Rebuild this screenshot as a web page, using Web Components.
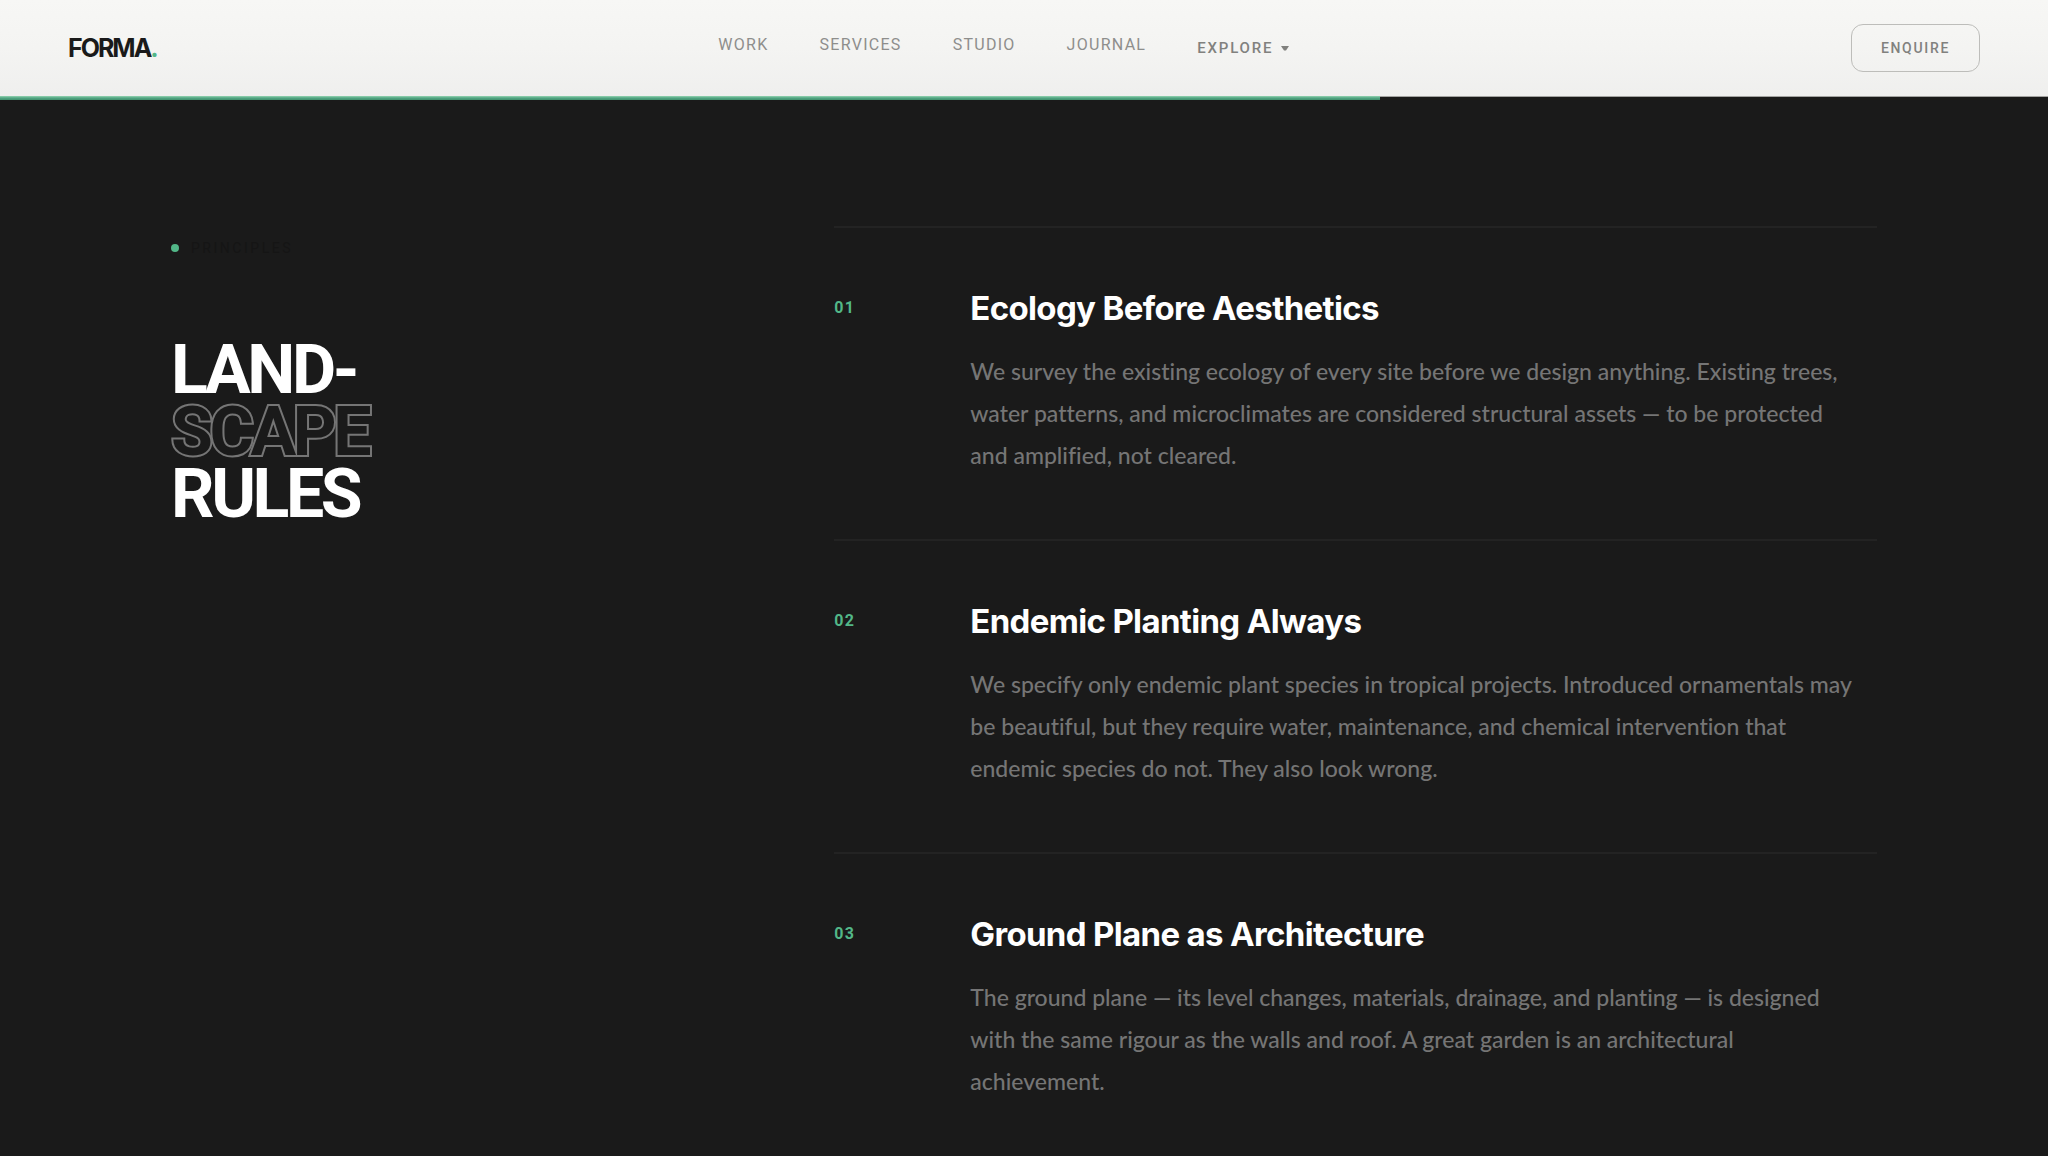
<!DOCTYPE html>
<html lang="en">
<head>
<meta charset="utf-8">
<title>FORMA. Principles</title>
<style>
  body { margin: 0; min-height: 100vh; background: #1a1a1a; font-family: Roboto, "Liberation Sans", sans-serif; }
</style>
</head>
<body>
<forma-header progress="67.4"></forma-header>
<main>
  <forma-principles>
    <forma-principle number="01">
      <span slot="title">Ecology Before Aesthetics</span>
      We survey the existing ecology of every site before we design anything. Existing trees, water patterns, and microclimates are considered structural assets — to be protected and amplified, not cleared.
    </forma-principle>
    <forma-principle number="02">
      <span slot="title">Endemic Planting Always</span>
      We specify only endemic plant species in tropical projects. Introduced ornamentals may be beautiful, but they require water, maintenance, and chemical intervention that endemic species do not. They also look wrong.
    </forma-principle>
    <forma-principle number="03">
      <span slot="title">Ground Plane as Architecture</span>
      The ground plane — its level changes, materials, drainage, and planting — is designed with the same rigour as the walls and roof. A great garden is an architectural achievement.
    </forma-principle>
  </forma-principles>
</main>
<script>
class FormaHeader extends HTMLElement {
  connectedCallback() {
    this.attachShadow({ mode: 'open' }).innerHTML = `
      <style>
        :host { display: block; position: sticky; top: 0; z-index: 1; }
        header { display: flex; justify-content: space-between; align-items: center; height: 96px; padding: 0 68px;
          border-bottom: 1px solid #a3a3a1; background: linear-gradient(#f7f7f5, #f4f4f2 50%, #efefee); }
        a { color: inherit; text-decoration: none; }
        .logo { font-family: Inter, sans-serif; font-size: 25px; line-height: 32px; font-weight: 700; letter-spacing: -0.08em; color: #1a1a1a; }
        .logo span { color: #52b788; }
        nav { display: flex; align-items: center; gap: 51px; font-size: 16px; line-height: 24px; letter-spacing: 0.08em; color: #8e8e8c; }
        nav a { padding-bottom: 6px; }
        button { font-family: inherit; color: #81817e; background: none; cursor: pointer; }
        nav button { display: flex; align-items: center; gap: 8px; padding: 0; border: 0; font-size: 15px; line-height: 24px; font-weight: 500; letter-spacing: 0.12em; }
        .enquire { height: 48px; padding: 0 29px; border: 1px solid #bdbdba; border-radius: 12px;
          font-size: 14px; font-weight: 500; letter-spacing: 0.12em; }
        .track { height: 4px; margin: -1px 0 -4px; }
        .bar { height: 4px; background: linear-gradient(#95d5b2, #52a583 50%, #40916c); }
      </style>
      <header>
        <a class="logo" href="#">FORMA<span>.</span></a>
        <nav>
          <a href="#">WORK</a><a href="#">SERVICES</a><a href="#">STUDIO</a><a href="#">JOURNAL</a>
          <button type="button">EXPLORE
            <svg width="8" height="5" viewBox="0 0 8 5" aria-hidden="true"><path d="M0 0h8L5 4.500H3z" fill="currentColor"/></svg>
          </button>
        </nav>
        <button class="enquire" type="button">ENQUIRE</button>
      </header>
      <div class="track"><div class="bar" style="width:${this.getAttribute('progress')}%"></div></div>`;
  }
}
class FormaPrinciples extends HTMLElement {
  connectedCallback() {
    this.attachShadow({ mode: 'open' }).innerHTML = `
      <style>
        :host { display: grid; grid-template-columns: 1fr 2fr; column-gap: 142px; padding: 130px 171px 0; }
        .label { display: flex; align-items: center; gap: 12px; margin: 11px 0 0; font-size: 14px; line-height: 22px;
          letter-spacing: 0.18em; color: #151515; }
        .label::before { content: ""; width: 8px; height: 8px; border-radius: 50%; background: #52b788; }
        h1 { margin: 80px 0 0; font-size: 68px; line-height: 62px; font-weight: 700; letter-spacing: -0.05em; color: #fff; }
        h1 span { display: block; }
        /* Stroke sits behind a background-coloured fill, so only the outer contour shows. */
        .outline { color: #1a1a1a; -webkit-text-stroke: 4px #757575; paint-order: stroke fill; }
      </style>
      <div>
        <p class="label">PRINCIPLES</p>
        <h1><span>LAND-</span><span class="outline">SCAPE</span><span>RULES</span></h1>
      </div>
      <section><slot></slot></section>`;
  }
}
class FormaPrinciple extends HTMLElement {
  connectedCallback() {
    this.attachShadow({ mode: 'open' }).innerHTML = `
      <style>
        :host { display: grid; grid-template-columns: 136px 1fr; padding: 62px 0 63px; border-top: 2px solid #232323; }
        :host(:last-of-type) { padding-bottom: 48px; }
        .number { font-size: 16px; line-height: 36px; font-weight: 700; letter-spacing: 0.08em; color: #52b788; }
        h2 { margin: 0 0 24px; font-family: Inter, sans-serif; font-size: 33px; line-height: 36px; font-weight: 700; letter-spacing: -0.02em; color: #fff; }
        p { margin: 0; padding-right: 12px; font-family: Lato, sans-serif; font-size: 23px; line-height: 42px; font-weight: 500;
          font-variant-ligatures: none; color: #757575; }
      </style>
      <span class="number">${this.getAttribute('number')}</span>
      <article><h2><slot name="title"></slot></h2><p><slot></slot></p></article>`;
  }
}
customElements.define('forma-header', FormaHeader);
customElements.define('forma-principles', FormaPrinciples);
customElements.define('forma-principle', FormaPrinciple);
</script>
</body>
</html>
